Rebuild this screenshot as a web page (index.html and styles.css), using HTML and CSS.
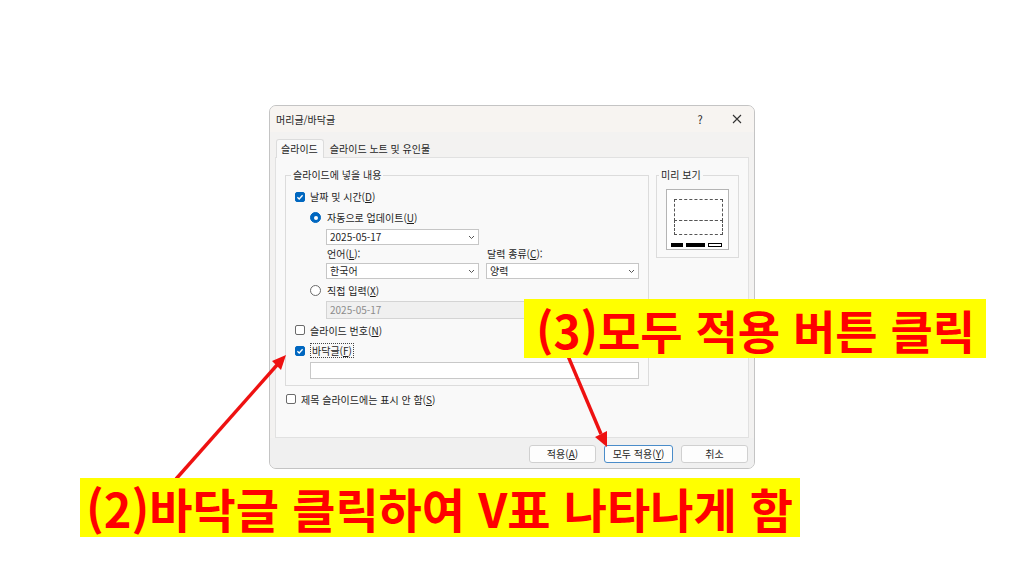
FILE: index.html
```html
<!DOCTYPE html>
<html lang="ko">
<head>
  <meta charset="UTF-8">
  <title>머리글/바닥글</title>
  <link rel="stylesheet" href="styles.css">
</head>
<body>

  <div class="page">
    <div class="dialog">
      <div class="titlebar">
        <span class="title">머리글/바닥글</span>
        <span class="title-btn help">?</span>
        <span class="title-btn close">
          <svg width="10" height="10" viewBox="0 0 10 10"><path d="M1 1L9 9M9 1L1 9" stroke="#333" stroke-width="1.1" fill="none"/></svg>
        </span>
      </div>

      <div class="tabs">
        <div class="tab active">슬라이드</div>
        <div class="tab">슬라이드 노트 및 유인물</div>
      </div>

      <div class="pane">
        <div class="pane-top">
          <!-- 슬라이드에 넣을 내용 -->
          <fieldset class="group content">
            <legend>슬라이드에 넣을 내용</legend>
            <div class="row row-date">
              <span class="check on"><svg width="10" height="10" viewBox="0 0 10 10"><path d="M2.4 5.2L4.2 7L7.6 3.2" stroke="#fff" stroke-width="1.3" fill="none"/></svg></span>
              <span>날짜 및 시간(<u>D</u>)</span>
            </div>
            <div class="sub">
              <div class="row row-auto"><span class="radio on"></span><span>자동으로 업데이트(<u>U</u>)</span></div>
              <div class="field-block">
                <div class="select">2025-05-17<svg class="chev" width="7" height="5" viewBox="0 0 7 5"><path d="M1 1L3.5 3.5L6 1" stroke="#555" stroke-width="1" fill="none"/></svg></div>
                <div class="pair">
                  <div class="col">
                    <div class="caption">언어(<u>L</u>):</div>
                    <div class="select">한국어<svg class="chev" width="7" height="5" viewBox="0 0 7 5"><path d="M1 1L3.5 3.5L6 1" stroke="#555" stroke-width="1" fill="none"/></svg></div>
                  </div>
                  <div class="col">
                    <div class="caption">달력 종류(<u>C</u>):</div>
                    <div class="select">양력<svg class="chev" width="7" height="5" viewBox="0 0 7 5"><path d="M1 1L3.5 3.5L6 1" stroke="#555" stroke-width="1" fill="none"/></svg></div>
                  </div>
                </div>
              </div>
              <div class="row row-manual"><span class="radio"></span><span>직접 입력(<u>X</u>)</span></div>
              <div class="field-block">
                <div class="input disabled">2025-05-17</div>
              </div>
            </div>
            <div class="row row-number"><span class="check"></span><span>슬라이드 번호(<u>N</u>)</span></div>
            <div class="row row-footer">
              <span class="check on"><svg width="10" height="10" viewBox="0 0 10 10"><path d="M2.4 5.2L4.2 7L7.6 3.2" stroke="#fff" stroke-width="1.3" fill="none"/></svg></span>
              <span class="focus">바닥글(<u>F</u>)</span>
            </div>
            <div class="input footer-text"></div>
          </fieldset>

          <!-- 미리 보기 -->
          <fieldset class="group preview">
            <legend>미리 보기</legend>
            <div class="thumb">
              <div class="dash top"></div>
              <div class="dash bottom"></div>
              <div class="bars">
                <span class="bar b1"></span>
                <span class="bar b2"></span>
                <span class="bar b3"></span>
              </div>
            </div>
          </fieldset>
        </div>

        <div class="row row-title"><span class="check"></span><span>제목 슬라이드에는 표시 안 함(<u>S</u>)</span></div>
      </div>

      <div class="footer">
        <button>적용(<u>A</u>)</button>
        <button class="primary">모두 적용(<u>Y</u>)</button>
        <button>취소</button>
      </div>
    </div>
  </div>

  <!-- callout arrows -->
  <svg class="arrows" width="1024" height="576" viewBox="0 0 1024 576">
    <line x1="176" y1="479" x2="277" y2="365" stroke="#ee1111" stroke-width="3.4"/>
    <polygon points="286,355 281,370 272,361" fill="#ee1111"/>
    <line x1="568" y1="356" x2="601" y2="434" stroke="#ee1111" stroke-width="3.4"/>
    <polygon points="607,447 607,431 595,437" fill="#ee1111"/>
  </svg>

  <div class="banner banner-3">(3)모두 적용 버튼 클릭</div>
  <div class="banner banner-2">(2)바닥글 클릭하여 V표 나타나게 함</div>

</body>
</html>
```

FILE: styles.css
```css
* {
  box-sizing: border-box;
}

body {
  margin: 0;
  background: #fff;
  font-family: "Noto Sans CJK KR", "Noto Sans", sans-serif;
  font-size: 10px;
  color: #1e1e1e;
}

.page {
  padding: 105px 0 0 269px;
}

.dialog {
  width: 486px;
  height: 364px;
  border: 1px solid #c4c4c4;
  border-radius: 7px;
  background: #f3f2f1;
  display: flex;
  flex-direction: column;
  overflow: hidden;
}

.titlebar {
  height: 26px;
  display: flex;
  align-items: center;
  gap: 7px;
  padding: 0 2px 0 6px;
  background: #f7f4f1;
}

.title-btn {
  width: 30px;
  font-size: 11px;
  display: flex;
  justify-content: center;
}

.help {
  margin-left: auto;
}

.tabs {
  display: flex;
  margin: 7px 0 -1px 6px;
  height: 19px;
}

.tab {
  height: 19px;
  line-height: 17px;
  padding: 0 5px;
  border: 1px solid transparent;
  border-bottom: none;
}

.tab.active {
  background: #f9f9f9;
  border-color: #dcdcdc;
  border-radius: 3px 3px 0 0;
  padding: 0 5px 0 4px;
  position: relative;
  z-index: 1;
}

.pane {
  height: 281px;
  margin: 0 5px;
  border: 1px solid #e1e1e1;
  background: #f9f9f9;
  padding: 10px 9px 0 9px;
}

.pane-top {
  display: flex;
  align-items: flex-start;
  gap: 7px;
}

.group {
  margin: 0;
  border: 1px solid #dcdcdc;
  padding: 0;
  min-width: 0;
}

.group legend {
  line-height: 14px;
  padding: 0 2px;
}

.content {
  width: 364px;
  padding: 4px 9px 6px 9px;
}

.content legend {
  margin-left: -4px;
}

.preview {
  width: 83px;
  padding: 7px 8px 7px 9px;
}

.preview legend {
  margin-left: -7px;
}

.row {
  display: flex;
  align-items: center;
  gap: 5px;
}

.row-date { height: 21px; }
.row-auto { height: 21px; }
.row-manual { height: 22px; }
.row-number { height: 22px; }
.row-footer { height: 19px; }

.row-title {
  height: 22px;
  margin: 2px 0 0 1px;
}

.check {
  width: 10px;
  height: 10px;
  border: 1px solid #6a6a6a;
  border-radius: 2px;
  background: #fff;
  display: flex;
  flex-shrink: 0;
}

.check.on {
  background: #0067c0;
  border-color: #0067c0;
  align-items: center;
  justify-content: center;
}

.check.on svg {
  margin: -1px;
}

.radio {
  width: 11px;
  height: 11px;
  border: 1px solid #6a6a6a;
  border-radius: 50%;
  background: #fff;
  display: flex;
  align-items: center;
  justify-content: center;
  flex-shrink: 0;
}

.radio.on {
  background: #0067c0;
  border-color: #0067c0;
}

.radio.on::after {
  content: "";
  width: 4px;
  height: 4px;
  border-radius: 50%;
  background: #fff;
}

.sub {
  margin-left: 15px;
}

.row-auto,
.row-manual {
  gap: 6px;
}

.field-block {
  margin-left: 16px;
}

.select {
  width: 153px;
  height: 16px;
  margin-top: 1px;
  border: 1px solid #c6c6c6;
  background: #fff;
  display: flex;
  align-items: center;
  padding: 0 3px 0 3px;
  line-height: 14px;
}

.select .chev {
  margin-left: auto;
}

.pair {
  display: flex;
  gap: 7px;
}

.pair .select {
  margin-top: 0;
}

.caption {
  height: 18px;
  line-height: 18px;
  padding-left: 1px;
}

.input {
  height: 18px;
  border: 1px solid #c8c8c8;
  background: #fff;
  line-height: 16px;
  padding: 0 3px;
}

.input.disabled {
  width: 313px;
  background: #f0f0f0;
  border-color: #d4d4d4;
  color: #8c8c8c;
}

.input.footer-text {
  width: 329px;
  height: 17px;
  margin: 2px 0 0 15px;
}

.focus {
  border: 1px dotted #444;
  padding: 0 1px;
  line-height: 13px;
}

.thumb {
  width: 63px;
  height: 61px;
  border: 1px solid #b4b4b4;
  background: #fff;
  padding: 9px 6px 0 6px;
  display: flex;
  flex-direction: column;
}

.dash {
  border: 1px dashed #555;
  margin: 0 0 0 1px;
  width: 49px;
}

.dash.top {
  height: 22px;
}

.dash.bottom {
  height: 15px;
  margin-top: -1px;
}

.bars {
  display: flex;
  gap: 3px;
  margin: 8px 0 0 -2px;
}

.bar {
  height: 4px;
  background: #000;
}

.b1 { width: 14px; }
.b2 { width: 22px; }
.b3 {
  width: 16px;
  background: #fff;
  border: 1px solid #000;
}

.footer {
  flex: 1;
  display: flex;
  justify-content: flex-end;
  align-items: flex-start;
  gap: 8px;
  padding: 7px 6px 0 0;
  background: #f0f0f0;
}

button {
  width: 67px;
  height: 18px;
  border: 1px solid #d0d0d0;
  border-radius: 3px;
  background: #fdfdfd;
  font-family: inherit;
  font-size: 10px;
  color: #1e1e1e;
  padding: 0;
  line-height: 16px;
}

button.primary {
  border-color: #4a8cc9;
  width: 69px;
}

u {
  text-underline-offset: 1px;
}

.arrows {
  position: absolute;
  left: 0;
  top: 0;
  pointer-events: none;
}

.banner {
  position: absolute;
  background: #ffff00;
  color: #ff0000;
  font-weight: 700;
  display: flex;
  align-items: center;
  white-space: nowrap;
  line-height: 1;
}

.banner-3 {
  left: 524px;
  top: 299px;
  width: 462px;
  height: 59px;
  padding-left: 12px;
  font-size: 46px;
}

.banner-2 {
  left: 80px;
  top: 478px;
  width: 720px;
  height: 59px;
  padding-left: 6px;
  font-size: 47px;
}
```
